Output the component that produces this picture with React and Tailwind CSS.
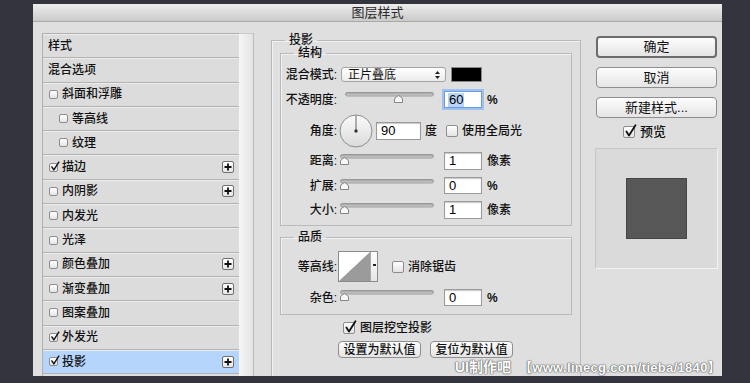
import React from "react";

const font = "font-['Liberation_Sans','Noto_Sans_CJK_SC',sans-serif]";

const Check = ({ checked, size = 9 }) => (
  <span
    className="relative inline-block shrink-0 rounded-[2px] border border-[#8d8d8d] bg-gradient-to-b from-[#ffffff] to-[#e4e4e4]"
    style={{ width: size, height: size }}
  >
    {checked && (
      <svg
        className="absolute left-[0px] top-[-3px]"
        width={size + 1}
        height={size + 2}
        viewBox="0 0 12 13"
      >
        <path d="M2.2 7 L4.6 10.6 L10.6 1.2" fill="none" stroke="#111" strokeWidth="1.7" strokeLinecap="round" strokeLinejoin="round" />
      </svg>
    )}
  </span>
);

const Plus = () => (
  <span className="flex h-[12px] w-[12px] items-center justify-center rounded-[2px] border border-[#6f6f6f] bg-gradient-to-b from-white to-[#e6e6e6]">
    <svg width="8" height="8" viewBox="0 0 8 8">
      <path d="M4 0.5 V7.5 M0.5 4 H7.5" stroke="#111" strokeWidth="1.8" />
    </svg>
  </span>
);

const Slider = ({ width = 93, pos = 0 }) => (
  <svg width={width + 1} height="12" viewBox={`0 0 ${width + 1} 12`} className="block">
    <defs>
      <linearGradient id="trk" x1="0" y1="0" x2="0" y2="1">
        <stop offset="0" stopColor="#9c9c9c" />
        <stop offset="1" stopColor="#d6d6d6" />
      </linearGradient>
    </defs>
    <rect x="0.5" y="0.5" width={width} height="3.5" rx="1.8" fill="url(#trk)" stroke="#8e8e8e" strokeWidth="0.8" />
    <path
      d={`M${pos + 0.5} 10.5 L${pos + 0.5} 7 Q${pos + 1} 5 ${pos + 4.5} 3.6 Q${pos + 8} 5 ${pos + 8.5} 7 L${pos + 8.5} 10.5 Z`}
      fill="#f7f7f7"
      stroke="#7a7a7a"
      strokeWidth="0.9"
    />
  </svg>
);

const Field = ({ value, w = 38, h = 17, focus }) => (
  <div
    className={
      focus
        ? "flex items-center bg-white pl-[3px] text-[13px] text-black border border-[#6e9be0] shadow-[0_0_0_2px_#9fc1ef]"
        : "flex items-center bg-white pl-[4px] text-[13px] text-black border border-[#9a9a9a] shadow-[inset_0_1px_1px_#c9c9c9]"
    }
    style={{ width: w, height: h }}
  >
    {focus ? <span className="bg-[#b7d3f6] px-[1px] leading-[14px]">{value}</span> : value}
  </div>
);

const Btn = ({ children, w, h, main }) => (
  <div
    className={
      "flex items-center justify-center rounded-[4px] bg-gradient-to-b from-[#fdfdfd] to-[#e5e5e5] text-[13px] text-[#111] " +
      (main ? "border-2 border-[#6c6c6c]" : "border border-[#8e8e8e]")
    }
    style={{ width: w, height: h }}
  >
    {children}
  </div>
);

const rows = [
  { label: "样式", plain: true },
  { label: "混合选项", plain: true },
  { label: "斜面和浮雕" },
  { label: "等高线", indent: true },
  { label: "纹理", indent: true },
  { label: "描边", checked: true, plus: true },
  { label: "内阴影", plus: true },
  { label: "内发光" },
  { label: "光泽" },
  { label: "颜色叠加", plus: true },
  { label: "渐变叠加", plus: true },
  { label: "图案叠加" },
  { label: "外发光", checked: true },
  { label: "投影", checked: true, plus: true, active: true },
];

const Label = ({ children }) => (
  <div className="w-[56px] shrink-0 text-right text-[12px] font-medium text-[#111]">{children}</div>
);

export default function App() {
  return (
    <div className={`relative h-[383px] w-[750px] overflow-hidden bg-[#34343e] pl-[33px] pt-[4px] ${font}`}>
      <div className="flex h-[372px] w-[689px] flex-col overflow-hidden bg-[#dfdfdf]">
        {/* title */}
        <div className="h-[18px] shrink-0 border-b border-[#a9a9a9] bg-gradient-to-b from-[#ededed] to-[#cacaca] text-center text-[13px] leading-[17px] text-[#2a2a2a]">
          图层样式
        </div>

        <div className="flex min-h-0 flex-1">
          {/* left list */}
          <div className="flex w-[220px] shrink-0 pl-[9px] pt-[11px]">
            <div className="w-[197px] border-l border-t border-[#b0b0b0]">
              {rows.map((r) => (
                <div
                  key={r.label}
                  className={
                    "flex h-[24.3px] items-center border-b border-[#b3b3b3] pr-[5px] shadow-[inset_0_1px_0_#ececec] " +
                    (r.active ? "bg-[#b5d5fd]" : "bg-[#dcdcdc]")
                  }
                >
                  {r.plain ? (
                    <span className="pl-[5px] text-[12px] font-medium text-[#111]">{r.label}</span>
                  ) : (
                    <div className={"flex items-center gap-[4px] " + (r.indent ? "pl-[16px]" : "pl-[6px]")}>
                      <Check checked={r.checked} />
                      <span className="text-[12px] font-medium text-[#111]">{r.label}</span>
                    </div>
                  )}
                  {r.plus && (
                    <div className="ml-auto">
                      <Plus />
                    </div>
                  )}
                </div>
              ))}
            </div>
            <div className="w-[14px] border-t border-[#c9c9c9] bg-gradient-to-r from-[#f6f6f6] to-[#e3e3e3]" />
          </div>
          <div className="mt-[11px] w-px shrink-0 bg-[#bcbcbc]" />

          {/* middle */}
          <div className="flex w-[327px] shrink-0 flex-col pl-[17px]">
            <fieldset className="mt-[12px] flex-1 border border-b-0 border-[#bababa] pl-[8px] shadow-[inset_1px_1px_0_#f2f2f2]">
              <legend className="ml-[5px] px-[4px] text-[12px] font-medium leading-[12px] text-[#111]">投影</legend>

              <fieldset className="w-[292px] border border-[#bababa] pb-[6px] shadow-[inset_1px_1px_0_#f2f2f2]">
                <legend className="ml-[13px] px-[4px] text-[12px] font-medium leading-[14px] text-[#111]">结构</legend>

                <div className="mt-[7px] flex h-[15px] items-center">
                  <Label>混合模式:</Label>
                  <div className="ml-[4px] flex h-[15px] w-[105px] items-center rounded-[3px] border border-[#a3a3a3] bg-gradient-to-b from-white to-[#ececec] pl-[6px] pr-[5px] text-[12px] text-[#111]">
                    正片叠底
                    <svg className="ml-auto" width="5" height="8" viewBox="0 0 5 8">
                      <path d="M0 3 L2.5 0 L5 3 Z M0 5 L2.5 8 L5 5 Z" fill="#222" />
                    </svg>
                  </div>
                  <div className="ml-[5px] h-[15px] w-[31px] border border-[#8a8a8a] bg-black" />
                </div>

                <div className="mt-[9px] flex h-[17px] items-center">
                  <Label>不透明度:</Label>
                  <div className="ml-[8px] self-start pt-[1px]">
                    <Slider width={88} pos={49} />
                  </div>
                  <div className="ml-[10px]">
                    <Field value="60" focus />
                  </div>
                  <span className="ml-[5px] text-[12px] font-bold text-[#111]">%</span>
                </div>

                <div className="mt-[6px] flex h-[33px] items-center">
                  <Label>角度:</Label>
                  <svg className="ml-[2px]" width="34" height="34" viewBox="0 0 34 34">
                    <defs>
                      <linearGradient id="dial" x1="0" y1="0" x2="0" y2="1">
                        <stop offset="0" stopColor="#fbfbfb" />
                        <stop offset="1" stopColor="#dadada" />
                      </linearGradient>
                    </defs>
                    <circle cx="17" cy="17" r="16" fill="url(#dial)" stroke="#8c8c8c" strokeWidth="1" />
                    <path d="M17 17 V1.5" stroke="#666" strokeWidth="1" />
                    <circle cx="17" cy="17" r="1.7" fill="#333" />
                  </svg>
                  <div className="ml-[3px]">
                    <Field value="90" w={45} h={18} />
                  </div>
                  <span className="ml-[4px] text-[12px] font-medium text-[#111]">度</span>
                  <div className="ml-[9px] flex items-center">
                    <Check size={12} />
                  </div>
                  <span className="ml-[4px] text-[12px] font-medium text-[#111]">使用全局光</span>
                </div>

                {[
                  ["距离:", "1", "像素", 18],
                  ["扩展:", "0", "%", 17],
                  ["大小:", "1", "像素", 18],
                ].map(([l, v, u, h], i) => (
                  <div key={l} className={(i === 0 ? "mt-[5px]" : "mt-[7px]") + " flex items-center"} style={{ height: h }}>
                    <Label>{l}</Label>
                    <div className="ml-[3px] self-start pt-[2px]">
                      <Slider width={93} pos={0} />
                    </div>
                    <div className="ml-[10px]">
                      <Field value={v} h={h} />
                    </div>
                    <span className={"ml-[5px] text-[12px] text-[#111] " + (u === "%" ? "font-bold" : "font-medium")}>{u}</span>
                  </div>
                ))}
              </fieldset>

              <fieldset className="mt-[4px] w-[292px] border border-[#bababa] pb-[8px] shadow-[inset_1px_1px_0_#f2f2f2]">
                <legend className="ml-[13px] px-[4px] text-[12px] font-medium leading-[14px] text-[#111]">品质</legend>
                <div className="mt-[7px] flex h-[31px] items-center">
                  <Label>等高线:</Label>
                  <div className="ml-[1px] flex h-[31px] border border-[#8c8c8c]">
                    <svg width="31" height="29" viewBox="0 0 31 29" className="block bg-white">
                      <path d="M0 29 L31 0 L31 29 Z" fill="#9b9b9b" />
                    </svg>
                    <div className="flex w-[7px] justify-center border-l border-[#a8a8a8] bg-gradient-to-b from-white to-[#e6e6e6] pt-[12px]">
                      <div className="h-[2px] w-[3px] bg-[#222]" />
                    </div>
                  </div>
                  <div className="ml-[14px] flex items-center">
                    <Check size={12} />
                  </div>
                  <span className="ml-[4px] text-[12px] font-medium text-[#111]">消除锯齿</span>
                </div>
                <div className="mt-[7px] flex h-[17px] items-center">
                  <Label>杂色:</Label>
                  <div className="ml-[3px] self-start pt-[1px]">
                    <Slider width={93} pos={0} />
                  </div>
                  <div className="ml-[10px]">
                    <Field value="0" />
                  </div>
                  <span className="ml-[5px] text-[12px] font-bold text-[#111]">%</span>
                </div>
              </fieldset>

              <div className="mt-[7px] flex h-[12px] items-center pl-[63px]">
                <Check size={12} checked />
                <span className="ml-[5px] text-[12px] font-medium text-[#111]">图层挖空投影</span>
              </div>
              <div className="mt-[7px] flex gap-[9px] pl-[58px]">
                <Btn w={83} h={17}>
                  <span className="text-[12px] font-medium">设置为默认值</span>
                </Btn>
                <Btn w={83} h={17}>
                  <span className="text-[12px] font-medium">复位为默认值</span>
                </Btn>
              </div>
            </fieldset>
          </div>

          {/* right */}
          <div className="flex w-[141px] shrink-0 flex-col pl-[15px] pt-[14px]">
            <Btn w={121} h={22} main>确定</Btn>
            <div className="mt-[9px]">
              <Btn w={121} h={21}>取消</Btn>
            </div>
            <div className="mt-[9px]">
              <Btn w={121} h={21}>新建样式...</Btn>
            </div>
            <div className="mt-[8px] flex h-[12px] items-center pl-[27px]">
              <Check size={12} checked />
              <span className="ml-[5px] text-[13px] font-medium leading-[12px] text-[#111]">预览</span>
            </div>
            <div className="-ml-[1px] mt-[10px] flex h-[121px] w-[123px] items-center justify-center border border-[#c6c6c6] border-b-[#f3f3f3] border-r-[#f3f3f3] bg-[#dadada]">
              <div className="h-[61px] w-[61px] border border-[#464646] bg-[#575757]" />
            </div>
          </div>
        </div>
      </div>

      {/* watermark */}
      <div className="absolute left-[455px] top-[357px] whitespace-nowrap text-[14px] font-bold text-white [text-shadow:0_0_1px_#555,0_0_1px_#555,0_0_2px_#777]">
        UI制作吧<span className="ml-[8px] text-[13px] font-bold tracking-[0.3px]">【www.linecg.com/tieba/1840】</span>
      </div>
    </div>
  );
}
